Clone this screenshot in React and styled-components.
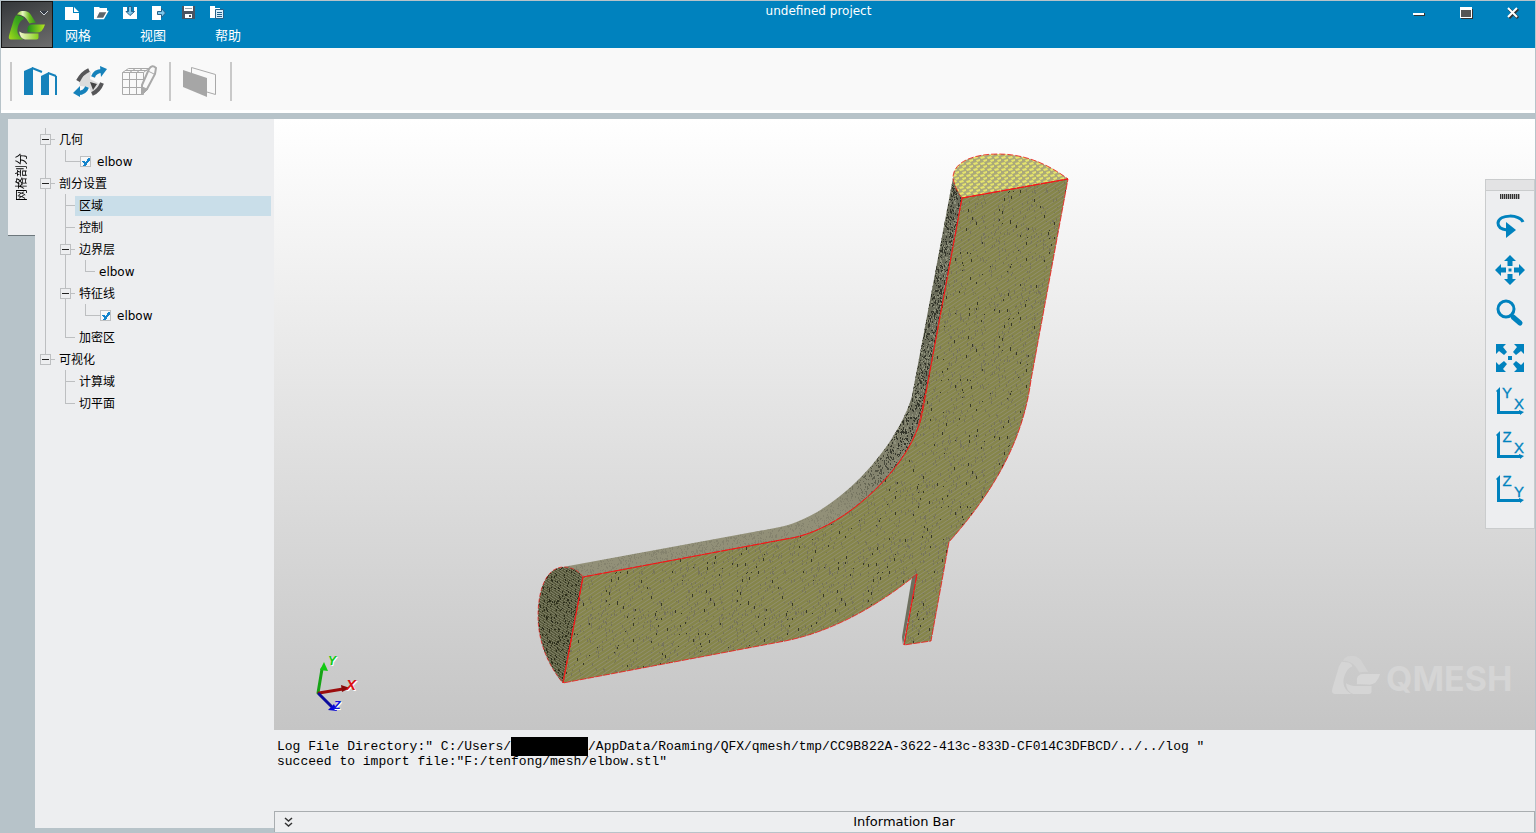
import React, { useState } from 'react';
import styled, { createGlobalStyle, css } from 'styled-components';

const BLUE = '#0082be';
const FRAME = '#b7c3c9';
const PANEL = '#edeef0';
const LINE = '#bdbfc1';
const UI_FONT = '"DejaVu Sans", "Noto Sans CJK SC", sans-serif';

const GlobalStyle = createGlobalStyle`
  *, *::before, *::after { box-sizing: border-box; }
  body { margin: 0; background: ${FRAME}; }
  button { border: 0; padding: 0; background: none; font: inherit; color: inherit; cursor: pointer; }
  svg { display: block; }
`;

const Window = styled.div`
  display: flex;
  flex-direction: column;
  min-height: 100vh;
  border: 1px solid ${FRAME};
  background: ${FRAME};
  font: 12px/20px ${UI_FONT};
  color: #000;
`;

/* ---------- title bar ---------- */
const Header = styled.header`
  display: flex;
  height: 47px;
  background: ${BLUE};
  color: #fff;
`;
const AppButton = styled.button`
  width: 52px;
  border: 1px solid #161616;
  background: linear-gradient(160deg, #35383b, #6d6d6d);
`;
const HeaderMain = styled.div`
  flex: 1;
  display: flex;
  flex-direction: column;
  padding: 0 15px 0 12px;
`;
const TitleRow = styled.div`
  display: flex;
  align-items: center;
  height: 24px;
`;
const QuickBar = styled.div`
  display: flex;
  gap: 14px;
`;
const QuickButton = styled.button`
  width: 15px;
  height: 15px;
`;
const Title = styled.h1`
  flex: 1;
  margin: 0;
  padding-bottom: 4px;
  font-size: 12px;
  font-weight: 400;
  text-align: center;
`;
const WindowControls = styled.div`
  display: flex;
  gap: 33px;
`;
const ControlButton = styled.button`
  width: 14px;
  height: 14px;
`;
const Menu = styled.nav`
  display: flex;
`;
const MenuButton = styled.button`
  width: 75px;
  font-size: 13px;
  line-height: 22px;
  text-align: left;
`;

/* ---------- tool bar ---------- */
const Toolbar = styled.div`
  display: flex;
  align-items: center;
  gap: 12px;
  height: 65px;
  padding: 4px 9px 0;
  background: #f9f9f9;
  border-bottom: 3px solid #fff;
`;
const Separator = styled.span`
  width: 2px;
  height: 39px;
  background: #c9c9c9;
`;
const ToolGroup = styled.div`
  display: flex;
  gap: 14px;
`;
const ToolButton = styled.button`
  width: 35px;
  height: 36px;
`;

/* ---------- body ---------- */
const Body = styled.main`
  flex: 1;
  display: flex;
  padding: 6px 0 0 7px;
`;
const SideTab = styled.button`
  align-self: flex-start;
  display: grid;
  place-items: center;
  width: 27px;
  height: 117px;
  background: ${PANEL};
  border-bottom: 1px solid #6d777c;
`;
const SideTabText = styled.span`
  writing-mode: vertical-rl;
  text-orientation: sideways;
  transform: rotate(180deg);
`;
const TreePanel = styled.aside`
  width: 239px;
  margin-bottom: 4px;
  padding: 9px 3px 0 0;
  background: ${PANEL};
`;
const Tree = styled.ul`
  margin: 0;
  padding: 0;
  list-style: none;
`;
const TreeRow = styled.li`
  display: flex;
  height: 22px;
`;
const guides = {
  blank: 'none',
  line: `linear-gradient(${LINE}, ${LINE}) 10px 0 / 1px 100% no-repeat`,
  tee: `linear-gradient(${LINE}, ${LINE}) 10px 0 / 1px 100% no-repeat,
        linear-gradient(${LINE}, ${LINE}) 10px 11px / 100% 1px no-repeat`,
  end: `linear-gradient(${LINE}, ${LINE}) 10px 0 / 1px 12px no-repeat,
        linear-gradient(${LINE}, ${LINE}) 10px 11px / 100% 1px no-repeat`,
};
const Guide = styled.span`
  width: ${(p) => (p.$wide ? 25 : 20)}px;
  padding: 6px 0 0 5px;
  background: ${(p) => guides[p.$kind]};
`;
const Toggle = styled.button`
  display: block;
  width: 11px;
  height: 11px;
  border: 1px solid ${LINE};
  background: linear-gradient(#222, #222) 1px 4px / 7px 1px no-repeat ${PANEL};
`;
const NodeLabel = styled.label`
  flex: 1;
  display: flex;
  align-items: center;
  gap: 6px;
  height: 20px;
  margin-top: 2px;
  padding-left: ${(p) => (p.$checkable ? 0 : 4)}px;
  ${(p) => p.$selected && css`background: #c9dee9;`}
`;
const CheckBox = styled.input`
  appearance: none;
  width: 11px;
  height: 11px;
  margin: 0 0 2px;
  border: 1px solid ${LINE};
  background: #f6f7f8;
  &:checked {
    background: linear-gradient(45deg, transparent 3px, #1484cc 3px, #1484cc 5px, transparent 5px) 1px 4px / 4px 5px no-repeat,
      linear-gradient(125deg, transparent 42%, #1484cc 42%, #1484cc 66%, transparent 66%) 2px 1px / 7px 8px no-repeat, #f6f7f8;
  }
`;

const Workspace = styled.section`
  flex: 1;
  min-width: 0;
  display: flex;
  flex-direction: column;
`;
const Viewport = styled.div`
  position: relative;
  flex: 1;
  display: grid;
  min-height: 0;
  background: linear-gradient(#fff, #c5c5c5);
`;
const Scene = styled.svg`
  width: 100%;
  height: 100%;
`;
const Palette = styled.div`
  position: absolute;
  top: 60px;
  right: 0;
  width: 50px;
  padding-bottom: 16px;
  display: flex;
  flex-direction: column;
  align-items: center;
  background: ${PANEL};
  border: 1px solid #cacccd;
`;
const PaletteBar = styled.div`
  width: 100%;
  height: 11px;
  background: #e3e3e4;
  border-bottom: 1px solid #cacccd;
`;
const Grip = styled.div`
  width: 20px;
  height: 5px;
  margin: 3px 0 5px;
  background: repeating-linear-gradient(90deg, #333 0 1px, #aaa 1px 2px);
`;
const PaletteButton = styled.button`
  display: grid;
  place-items: center;
  width: 44px;
  height: 44px;
`;
const Log = styled.div`
  height: 81px;
  padding: 9px 3px;
  background: ${PANEL};
  font: 13px/15px "Liberation Mono", monospace;
  white-space: pre;
  overflow: hidden;
`;
const Redacted = styled.span`
  display: inline-block;
  width: 77px;
  height: 19px;
  margin: -2px 0;
  background: #000;
  vertical-align: middle;
`;
const InfoBar = styled.footer`
  display: flex;
  align-items: center;
  height: 21px;
  padding: 0 20px 1px 8px;
  background: ${PANEL};
  border: 1px solid #a9adb0;
  border-bottom: 0;
`;
const CollapseButton = styled.button`
  width: 11px;
  height: 12px;
`;
const InfoTitle = styled.span`
  flex: 1;
  font-size: 13px;
  text-align: center;
`;

/* ---------- drawings ---------- */
function LogoMark({ a, b, c, d, transform }) {
  return (
    <g transform={transform}>
      <path fill={a} d="M14 13.300L19 14Q22 15 22 17Q18.500 18 16.500 23Q14.500 28 16 32Q17.500 35.500 21.500 37.600H9Q6 37.600 7 33.500L12 17Z" />
      <path fill={b} d="M15 12.500Q17 9 20 9H23Q27 9.500 29 13L34 21Q31 20.500 27.500 21.500L24.500 17Q21 12.500 15 12.500Z" />
      <path fill={c} d="M25.500 30.300V26Q26.500 22.500 30 22.500H43Q42 26 39.500 29Q37 31 33.500 30.500Q29 30 25.500 30.300Z" />
      <path fill={d} d="M17.300 29.500Q20 31.300 23 31.500H36.500V35.800Q36.500 37.600 34.500 37.600H23Q17.500 36 17.300 29.500Z" />
    </g>
  );
}

function AppLogo() {
  return (
    <svg width="50" height="45" viewBox="0 0 50 45" aria-hidden="true">
      <defs>
        <linearGradient id="lg1" x1="0" y1="1" x2="1" y2="0"><stop offset="0" stopColor="#a6dc1c" /><stop offset=".6" stopColor="#3fa81d" /><stop offset="1" stopColor="#2a8f1c" /></linearGradient>
        <linearGradient id="lg2"><stop offset="0" stopColor="#8ccb28" /><stop offset=".3" stopColor="#e9f7c4" /><stop offset=".65" stopColor="#6cbc1e" /><stop offset="1" stopColor="#2a961c" /></linearGradient>
        <linearGradient id="lg3"><stop offset="0" stopColor="#1d8f1c" /><stop offset="1" stopColor="#b4e51f" /></linearGradient>
        <linearGradient id="lg4"><stop offset="0" stopColor="#f3f8d0" /><stop offset="1" stopColor="#86cf18" /></linearGradient>
      </defs>
      <LogoMark a="url(#lg1)" b="url(#lg2)" c="url(#lg3)" d="url(#lg4)" />
      <path d="M38 9l4 4 4-4" fill="#343a44" stroke="#cdd3d8" />
    </svg>
  );
}

const quickIcons = [
  ['新建', <path key="a" fill="#fff" d="M0 1h8v6h6v7H0zM9 1l5 5H9z" />],
  ['打开', <g key="b"><path fill="#fff" d="M0 1h5l1 1h7v3H5l-4 8H0z" /><path fill="#5d656b" stroke="#fff" strokeWidth="1.500" d="M5 5.500h8.500l-4 7H1.500z" /></g>],
  ['导入', <g key="c"><path fill="#fff" d="M0 1h4v5h7V1h3v12H0z" /><path fill="#7ec6ea" stroke="#25618a" d="M5.500 .500h3v5h3l-4.500 4-4-4h2.500z" /></g>],
  ['导出', <g key="d"><path fill="#fff" d="M0 0h9v14H0z" /><path fill="#7ec6ea" stroke="#25618a" d="M5.500 5.500h4v-3l4 4.500-4 4.500v-3h-4z" /></g>],
  ['保存', <g key="e"><path fill="#4b5460" d="M1 0h13v13H1z" /><path fill="#fff" d="M3 0h9v5H3zM4 8h7v4H4z" /><path fill="#4b5460" d="M8 9h2v2H8z" /><path fill="#9aa3ab" d="M4 2h7v1H4z" /></g>],
  ['日志', <g key="f"><path fill="#fff" d="M0 0h5v2h5v2H5v8H0z" /><path fill="#d9eefa" stroke="#25618a" d="M5.500 3.500h8v9h-8z" /><path stroke="#25618a" d="M7 6.500h5M7 8.500h5M7 10.500h5" /></g>],
];

function WindowIcon({ kind }) {
  return (
    <svg width="14" height="14" viewBox="0 0 14 14" aria-hidden="true">
      {kind === 'min' && <g><path fill="#333" d="M2 7h11v3H2z" /><path fill="#fff" d="M1 7h11v2H1z" /></g>}
      {kind === 'max' && <g><path fill="#333" d="M2 3h12v10H2z" /><path fill="#fff" d="M1 1h12v11H1z" /><path fill="#555" d="M2 4h10v7H2z" /></g>}
      {kind === 'close' && <g fill="none"><path stroke="#333" strokeWidth="3" d="M3 3l9 9M12 3l-9 9" /><path stroke="#fff" strokeWidth="2" d="M2 2l9 9M11 2l-9 9" /></g>}
    </svg>
  );
}

const GeometryIcon = () => (
  <svg width="35" height="36" viewBox="0 0 35 36" aria-hidden="true">
    <path fill="#1682bb" d="M0 8l9-4v28H0zM17 13l8-4v23h-8z" />
    <path fill="none" stroke="#1682bb" strokeWidth="2" d="M8 5l10 4M24 10l8 3" />
    <path fill="#1682bb" d="M31 13h2v19h-2z" />
  </svg>
);
const ConvertIcon = () => (
  <svg width="35" height="36" viewBox="0 0 35 36" aria-hidden="true">
    <path fill="#dcdcdc" d="M6 18L16 8l2 1-1 7 8 4 2 3-8 9-3-8-9-1z" />
    <path fill="none" stroke="#565658" strokeWidth="4" d="M5 18Q9 10 16 7M19 31q7-3 10-11" />
    <path fill="none" stroke="#1682bb" strokeWidth="4" d="M20 14q2-6 9-6M14 24q-2 6-9 6" />
    <path fill="#1682bb" d="M27 3l7 3-6 8zM7 23l-7 7 7 4z" />
    <path fill="#444" d="M17 19l7 2-4 6z" />
  </svg>
);
const MeshEditIcon = () => (
  <svg width="35" height="36" viewBox="0 0 35 36" aria-hidden="true" fill="none" stroke="#a9a9a9">
    <path d="M.5 9.500h21v22H.5zM.5 16.500h21M.5 24.500h21M7.500 9.500v22M14.500 9.500v22M.5 9.500l6-4h22M7.500 9.500l6-4M14.500 9.500l6-4M21.500 9.500l5-4M3 7.500h22M21 31l5-5" />
    <path fill="#f9f9f9" strokeWidth="2" d="M27 6q3-5 7-1l-1 6-8 15-5 4v-8z" />
    <path fill="#a9a9a9" d="M20 24l5 2-4 5z" />
    <path d="M26 8l6 3" />
  </svg>
);
const PlaneIcon = () => (
  <svg width="35" height="36" viewBox="0 0 35 36" aria-hidden="true">
    <path fill="none" stroke="#a9a9a9" d="M8.500 4.500l24 7v20l-24-7z" />
    <path fill="#a6a6a6" d="M0 7l24 8v19L0 24z" />
  </svg>
);

const axisFrame = <path fill={BLUE} d="M1 4l4-4v24h19v-1l5 2-4 3v-1H2V5z" />;
const AxisLetters = ({ up, right }) => (
  <g>
    {axisFrame}
    <g fill={BLUE} stroke={BLUE} strokeWidth=".3" fontFamily="Liberation Sans, sans-serif" fontSize="15" textAnchor="middle">
      <text x="12" y="11">{up}</text>
      <text x="24" y="22">{right}</text>
    </g>
  </g>
);
const arrowUp = 'M15 0l6 6h-3.500v5h-5V6H9z';
const cornerArrow = 'M1 1h10L8 4l4 5-3 3-5-4-3 3z';
const paletteTools = [
  ['旋转', <g key="r"><path fill="none" stroke={BLUE} strokeWidth="3" d="M28 11C25 3 4 3 3 12q0 6 9 7" /><path fill={BLUE} d="M11 11l10 8-10 8z" /></g>],
  ['平移', <g key="m" fill={BLUE}>{[0, 90, 180, 270].map((r) => <path key={r} d={arrowUp} transform={`rotate(${r} 15 15)`} />)}<path d="M13.500 13.500h3v3h-3z" /></g>],
  ['缩放', <g key="z" fill="none" stroke={BLUE} strokeLinecap="round"><circle cx="11" cy="10" r="8" strokeWidth="3" /><path strokeWidth="5" d="M18 18l7 6" /></g>],
  ['适应窗口', <g key="f" fill={BLUE}>{[0, 90, 180, 270].map((r) => <path key={r} d={cornerArrow} transform={`rotate(${r} 15 15)`} />)}<path d="M13 13h4v4h-4z" /></g>],
  ['XY 视图', <AxisLetters key="xy" up="Y" right="X" />],
  ['XZ 视图', <AxisLetters key="xz" up="Z" right="X" />],
  ['YZ 视图', <AxisLetters key="yz" up="Z" right="Y" />],
];

/* Deterministic speckles so that the mesh tiles look the same on every load. */
function speckles(count, width, height, seed, tall = 3) {
  let s = seed;
  const next = (n) => {
    s = (s * 1103515245 + 12345) % 2147483648;
    return Math.floor((s / 2147483648) * n);
  };
  let d = '';
  for (let i = 0; i < count; i += 1) d += `M${next(width)} ${next(height)}h1v${1 + next(tall)}h-1z`;
  return d;
}
const faceSpecks = speckles(90, 131, 127, 17);
const faceMarks = speckles(600, 131, 127, 91);
const sideSpecks = speckles(620, 60, 60, 5, 2);
const sideLights = speckles(620, 60, 60, 44, 2);
const endSpecks = speckles(160, 47, 41, 8, 2);

const FACE = 'M962 198L1068 179L1031 380C1023 440 995 490 949 542L931 641L904 645L917 574C880 604 835 631 785 641L563 683L583 577L786 539C840 532 900 475 917 430C922 415 923 400 927 387Z';
const SIDE = 'M953 178L962 198L927 387C923 410 921 423 917 430C900 475 840 532 786 539L583 577L563 567L775 528C835 518 897 448 912 396Z';
const TOP = 'M962 198L1068 179C1048 164 1025 154 998 154C973 154 953 162 953 178Q955 189 962 198Z';
const END = 'M583 577Q576 567 563 567C545 568 538 592 538 616C538 644 550 668 563 683Z';
const LEG = 'M917 574L912 577L902 637L903 645Z';

function MeshScene() {
  return (
    <Scene viewBox="274 119 1261 611" preserveAspectRatio="xMidYMid slice" role="img" aria-label="elbow mesh">
      <defs>
        <pattern id="hatch" width="6" height="4" patternUnits="userSpaceOnUse">
          <path fill="#85854a" d="M0 0h6v4H0z" />
          <path stroke="#918f70" strokeWidth="1" d="M-1.500 5l9-6M-1.500 1l3-2M4.500 5l3-2" />
        </pattern>
        <pattern id="specks" width="131" height="127" patternUnits="userSpaceOnUse">
          <path fill="#77755a" d={faceMarks} />
          <path fill="#393a28" d={faceSpecks} />
        </pattern>
        <pattern id="noise" width="60" height="60" patternUnits="userSpaceOnUse">
          <path fill="#8e907b" d={sideLights} />
          <path fill="#34362b" d={sideSpecks} />
        </pattern>
        <pattern id="topMesh" width="7" height="6" patternUnits="userSpaceOnUse">
          <path fill="#aaa87a" d="M0 0h7v6H0z" />
          <path fill="#e6e56c" d="M0 1l4-1 1 2-4 1zM3 4l4-1v2l-3 1z" />
        </pattern>
        <pattern id="endMesh" width="4" height="5" patternUnits="userSpaceOnUse">
          <path fill="#55573a" d="M0 0h4v5H0z" />
          <path stroke="#85866b" d="M0 0l4 3M0 3l3 2" />
        </pattern>
        <pattern id="endNoise" width="47" height="41" patternUnits="userSpaceOnUse">
          <path fill="#2c2e1c" d={endSpecks} />
        </pattern>
        <linearGradient id="sideTone" gradientUnits="userSpaceOnUse" x1="930" y1="380" x2="840" y2="520">
          <stop offset="0" stopColor="#6b6d5b" />
          <stop offset="1" stopColor="#929078" />
        </linearGradient>
        <linearGradient id="noiseFade" gradientUnits="userSpaceOnUse" x1="890" y1="440" x2="850" y2="500">
          <stop offset="0" stopColor="#fff" />
          <stop offset="1" stopColor="#222" />
        </linearGradient>
        <mask id="noiseMask" maskUnits="userSpaceOnUse" x="274" y="119" width="1261" height="611">
          <path fill="url(#noiseFade)" d="M274 119h1261v611H274z" />
        </mask>
      </defs>

      <path d={SIDE} fill="url(#sideTone)" />
      <path d={SIDE} fill="url(#noise)" mask="url(#noiseMask)" />
      <path d={FACE} fill="url(#hatch)" />
      <path d={FACE} fill="url(#specks)" />
      <path d={TOP} fill="url(#topMesh)" />
      <path d={END} fill="url(#endMesh)" />
      <path d={END} fill="url(#endNoise)" />
      <path d={LEG} fill="#6d6f5e" />
      <g fill="none" stroke="#f01818">
        <path d={FACE} strokeDasharray="7 1" strokeOpacity=".8" />
        <path d={TOP} strokeDasharray="6 2" strokeOpacity=".8" />
        <path d={END} strokeDasharray="4 2" strokeOpacity=".7" />
        <path d="M962 198L927 387C923 410 921 423 917 430C900 475 840 532 786 539L583 577L563 683M962 198L1068 179M917 574L904 645" strokeDasharray="9 1" />
      </g>

      <g strokeWidth="3" strokeLinecap="round">
        <path stroke="#16a316" d="M318 693l4-24" />
        <path fill="#12c912" d="M324 662l4 9-8-1z" />
        <path stroke="#9b0d0d" d="M319 693l24-4" />
        <path fill="#8a0a0a" d="M350 688l-8 4-1-7z" />
        <path stroke="#0b0b9c" d="M319 694l12 12" />
        <path fill="#0707d6" d="M337 711l-9-1 6-6z" />
      </g>
      <g fontFamily="Liberation Sans, sans-serif" fontStyle="italic" fontWeight="700" textAnchor="middle">
        <g fill="#fff"><text x="333" y="666" fontSize="12">Y</text><text x="352" y="691" fontSize="15">X</text><text x="338" y="710" fontSize="11">Z</text></g>
        <text x="332" y="665" fill="#12c912" fontSize="12">Y</text>
        <text x="351" y="690" fill="#dd1010" fontSize="15">X</text>
        <text x="337" y="709" fill="#1111dd" fontSize="11">Z</text>
      </g>

      <LogoMark a="#d5d5d5" b="#d2d2d2" c="#d7d7d7" d="#d5d5d5" transform="translate(1323 644) scale(1.330)" />
      <text x="1386" y="691" fill="#d5d5d5" fontFamily="Inter, sans-serif" fontWeight="700" fontSize="34">QMESH</text>
    </Scene>
  );
}

const nodes = [
  { text: '几何', guides: ['tee'], toggle: true },
  { text: 'elbow', guides: ['line', 'end'], check: true },
  { text: '剖分设置', guides: ['tee'], toggle: true },
  { text: '区域', guides: ['line', 'tee'], selected: true },
  { text: '控制', guides: ['line', 'tee'] },
  { text: '边界层', guides: ['line', 'tee'], toggle: true },
  { text: 'elbow', guides: ['line', 'line', 'end'] },
  { text: '特征线', guides: ['line', 'tee'], toggle: true },
  { text: 'elbow', guides: ['line', 'line', 'end'], check: true },
  { text: '加密区', guides: ['line', 'end'] },
  { text: '可视化', guides: ['end'], toggle: true },
  { text: '计算域', guides: ['blank', 'tee'] },
  { text: '切平面', guides: ['blank', 'end'] },
];

function TreeNode({ node }) {
  const [checked, setChecked] = useState(true);
  const last = node.guides.length - 1;
  return (
    <TreeRow>
      {node.guides.map((kind, i) => (
        <Guide key={i} $kind={kind} $wide={i === last && node.check}>
          {i === last && node.toggle && <Toggle aria-label={node.text} />}
        </Guide>
      ))}
      <NodeLabel as={node.check ? 'label' : 'span'} $checkable={node.check} $selected={node.selected}>
        {node.check && <CheckBox type="checkbox" checked={checked} onChange={() => setChecked(!checked)} />}
        {node.text}
      </NodeLabel>
    </TreeRow>
  );
}

export default function App() {
  return (
    <Window>
      <GlobalStyle />
      <Header>
        <AppButton aria-label="QMESH"><AppLogo /></AppButton>
        <HeaderMain>
          <TitleRow>
            <QuickBar>
              {quickIcons.map(([label, icon]) => (
                <QuickButton key={label} aria-label={label}>
                  <svg width="15" height="15" viewBox="0 0 15 15" fill="none" aria-hidden="true">{icon}</svg>
                </QuickButton>
              ))}
            </QuickBar>
            <Title>undefined project</Title>
            <WindowControls>
              <ControlButton aria-label="最小化"><WindowIcon kind="min" /></ControlButton>
              <ControlButton aria-label="最大化"><WindowIcon kind="max" /></ControlButton>
              <ControlButton aria-label="关闭"><WindowIcon kind="close" /></ControlButton>
            </WindowControls>
          </TitleRow>
          <Menu>
            <MenuButton>网格</MenuButton>
            <MenuButton>视图</MenuButton>
            <MenuButton>帮助</MenuButton>
          </Menu>
        </HeaderMain>
      </Header>

      <Toolbar>
        <Separator />
        <ToolGroup>
          <ToolButton aria-label="几何"><GeometryIcon /></ToolButton>
          <ToolButton aria-label="转换"><ConvertIcon /></ToolButton>
          <ToolButton aria-label="网格编辑"><MeshEditIcon /></ToolButton>
        </ToolGroup>
        <Separator />
        <ToolButton aria-label="切平面"><PlaneIcon /></ToolButton>
        <Separator />
      </Toolbar>

      <Body>
        <SideTab><SideTabText>网格剖分</SideTabText></SideTab>
        <TreePanel>
          <Tree>{nodes.map((node, i) => <TreeNode key={i} node={node} />)}</Tree>
        </TreePanel>
        <Workspace>
          <Viewport>
            <MeshScene />
            <Palette>
              <PaletteBar />
              <Grip />
              {paletteTools.map(([label, icon]) => (
                <PaletteButton key={label} aria-label={label}>
                  <svg width="40" height="40" viewBox="-5 -5 40 40" aria-hidden="true">{icon}</svg>
                </PaletteButton>
              ))}
            </Palette>
          </Viewport>
          <Log role="log">
            <div>Log File Directory:" C:/Users/<Redacted />/AppData/Roaming/QFX/qmesh/tmp/CC9B822A-3622-413c-833D-CF014C3DFBCD/../../log "</div>
            <div>succeed to import file:"F:/tenfong/mesh/elbow.stl"</div>
          </Log>
          <InfoBar>
            <CollapseButton aria-label="Collapse">
              <svg width="11" height="12" viewBox="0 0 11 12" fill="none" stroke="#333" aria-hidden="true"><path d="M2 2l3.500 3L9 2M2 7l3.500 3L9 7" strokeWidth="1.500" /></svg>
            </CollapseButton>
            <InfoTitle>Information Bar</InfoTitle>
          </InfoBar>
        </Workspace>
      </Body>
    </Window>
  );
}
